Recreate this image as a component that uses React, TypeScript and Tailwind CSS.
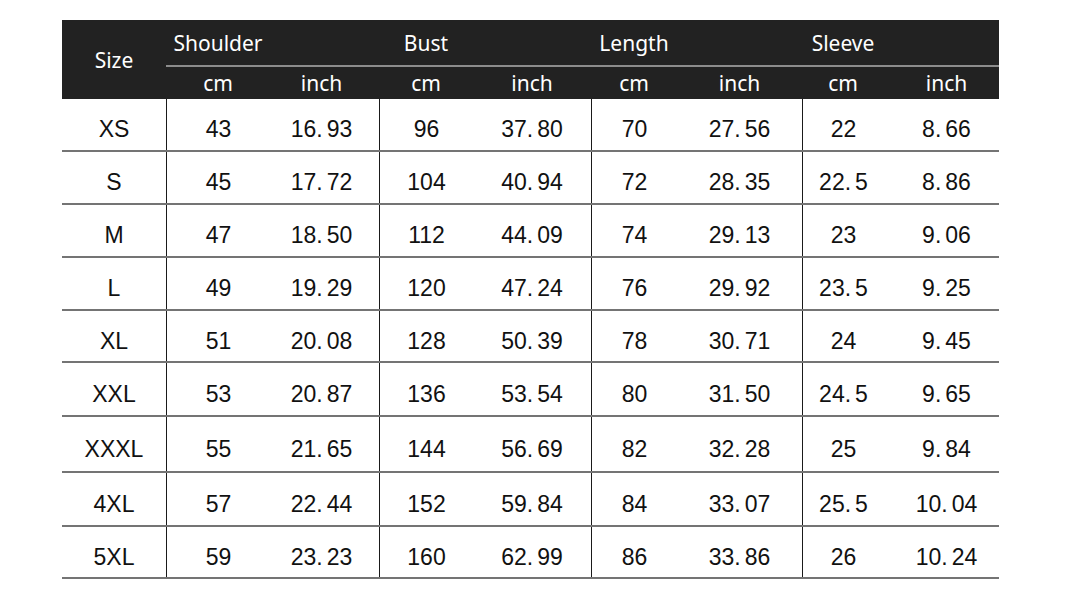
import React from "react";

const sizes = [
  { size: "XS", h: "h-[53px]", v: ["43", "16.93", "96", "37.80", "70", "27.56", "22", "8.66"] },
  { size: "S", h: "h-[53px]", v: ["45", "17.72", "104", "40.94", "72", "28.35", "22.5", "8.86"] },
  { size: "M", h: "h-[53px]", v: ["47", "18.50", "112", "44.09", "74", "29.13", "23", "9.06"] },
  { size: "L", h: "h-[53px]", v: ["49", "19.29", "120", "47.24", "76", "29.92", "23.5", "9.25"] },
  { size: "XL", h: "h-[52px]", v: ["51", "20.08", "128", "50.39", "78", "30.71", "24", "9.45"] },
  { size: "XXL", h: "h-[54px]", v: ["53", "20.87", "136", "53.54", "80", "31.50", "24.5", "9.65"] },
  { size: "XXXL", h: "h-[56px]", v: ["55", "21.65", "144", "56.69", "82", "32.28", "25", "9.84"] },
  { size: "4XL", h: "h-[54px]", v: ["57", "22.44", "152", "59.84", "84", "33.07", "25.5", "10.04"] },
  { size: "5XL", h: "h-[52px]", v: ["59", "23.23", "160", "62.99", "86", "33.86", "26", "10.24"] },
];

const groups = ["Shoulder", "Bust", "Length", "Sleeve"];

const cols =
  "grid grid-cols-[104px_104px_109px_94px_118px_86px_125px_82px_115px]";

// per-column nudges so the text sits where the original put it
const nudge = ["", "pr-[6px]", "", "", "", "", "", "pl-[10px]"];

// the original font leaves a gap after the decimal point
function Num({ value }: { value: string }) {
  const [a, b] = value.split(".");
  if (b === undefined) return <>{value}</>;
  return (
    <>
      {a}.<span className="ml-[4px]">{b}</span>
    </>
  );
}

export default function App() {
  return (
    <div className="min-h-[589px] w-[1072px] bg-white pt-[20px] pl-[62px]">
      <div className="w-[937px]">
        {/* header */}
        <div
          className={`${cols} grid-rows-[47px_32px] bg-[#222] text-white text-[21px] font-['Noto_Sans',sans-serif]`}
        >
          <div className="row-span-2 flex items-center justify-center pt-[2px]">
            Size
          </div>
          {groups.map((g) => (
            <React.Fragment key={g}>
              <div className="flex items-center justify-center border-b-2 border-[#8c8c8c] pt-[3px]">
                {g}
              </div>
              <div className="border-b-2 border-[#8c8c8c]" />
            </React.Fragment>
          ))}
          {groups.map((g, i) => (
            <React.Fragment key={g + "-u"}>
              <div className="flex items-center justify-center pt-[2px]">
                cm
              </div>
              <div
                className={`flex items-center justify-center pt-[2px] ${nudge[i * 2 + 1]}`}
              >
                inch
              </div>
            </React.Fragment>
          ))}
        </div>

        {/* body */}
        {sizes.map((r) => (
          <div
            key={r.size}
            className={`${cols} ${r.h} border-b-2 border-[#747474] text-[#111] text-[23px] font-['Liberation_Sans',sans-serif]`}
          >
            <div className="flex items-center justify-center pt-[10px]">
              {r.size}
            </div>
            {r.v.map((val, i) => (
              <div
                key={i}
                className={`flex items-center justify-center pt-[10px] ${nudge[i]} ${
                  i % 2 === 0 ? "border-l border-[#1a1a1a]" : ""
                }`}
              >
                <Num value={val} />
              </div>
            ))}
          </div>
        ))}
      </div>
    </div>
  );
}
